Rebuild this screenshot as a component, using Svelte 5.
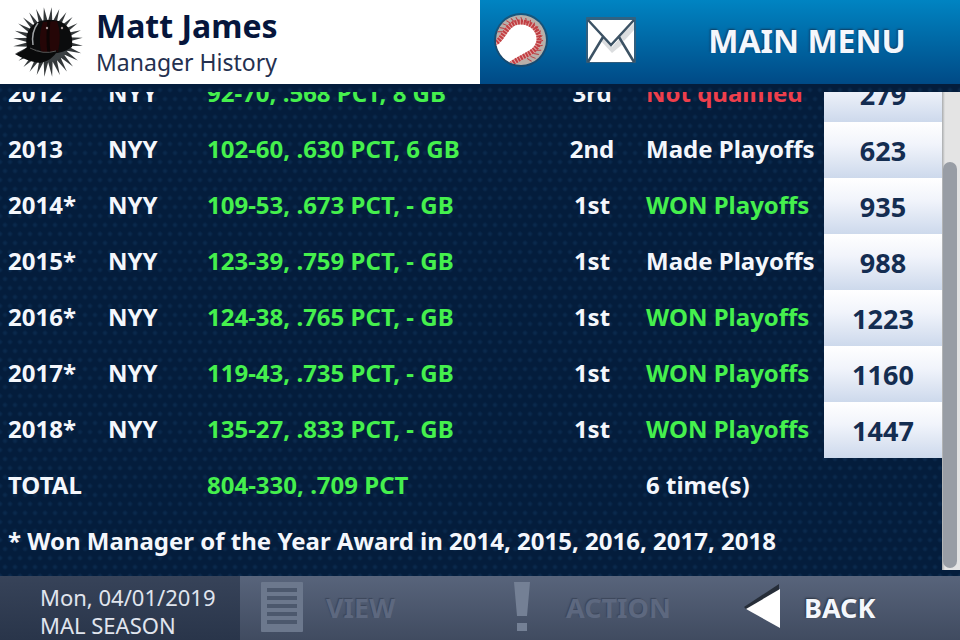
<script lang="ts">
  interface Season {
    year: string
    team: string
    record: string
    place: string
    result: string
    tone: 'plain' | 'good' | 'bad'
    points: number
  }

  const seasons: Season[] = [
    { year: '2012',  team: 'NYY', record: '92-70, .568 PCT, 8 GB',  place: '3rd', result: 'Not qualified', tone: 'bad',   points: 279 },
    { year: '2013',  team: 'NYY', record: '102-60, .630 PCT, 6 GB', place: '2nd', result: 'Made Playoffs', tone: 'plain', points: 623 },
    { year: '2014*', team: 'NYY', record: '109-53, .673 PCT, - GB', place: '1st', result: 'WON Playoffs',  tone: 'good',  points: 935 },
    { year: '2015*', team: 'NYY', record: '123-39, .759 PCT, - GB', place: '1st', result: 'Made Playoffs', tone: 'plain', points: 988 },
    { year: '2016*', team: 'NYY', record: '124-38, .765 PCT, - GB', place: '1st', result: 'WON Playoffs',  tone: 'good',  points: 1223 },
    { year: '2017*', team: 'NYY', record: '119-43, .735 PCT, - GB', place: '1st', result: 'WON Playoffs',  tone: 'good',  points: 1160 },
    { year: '2018*', team: 'NYY', record: '135-27, .833 PCT, - GB', place: '1st', result: 'WON Playoffs',  tone: 'good',  points: 1447 },
  ]

  // spikes around the cap logo, and stitches along the ball's seam
  const spikes = Array.from({ length: 28 }, (_, i) => (i * 360) / 28 + 6)
  const stitches = Array.from({ length: 19 }, (_, i) => -70 + i * 12)
</script>

<div class="screen">
  <header class="top">
    <div class="profile">
      <svg class="crest" viewBox="0 0 72 72" aria-hidden="true">
        {#each spikes as angle}
          <path d="M33.6 17 L36 1 L38.4 17 Z" fill="#34383a" transform="rotate({angle} 36 36)" />
        {/each}
        <circle cx="37" cy="35" r="21" fill="#3b4043" />
        <path d="M15 41 C12 24 21 14 37 14 C53 13 62 23 60 41 Q49 49 35 47 Z" fill="#0b0c0d" />
        <path d="M31 16 Q26 29 29 46 L46 46 Q50 28 45 15 Z" fill="#250607" />
        <path d="M37 14 Q35 31 37 48" fill="none" stroke="#0d0404" stroke-width="3" />
        <path d="M26 17 Q19 26 21 39" fill="none" stroke="#9ea2a4" stroke-width="1.5" />
        <path d="M16 40 Q31 50 46 44 Q40 55 28 57 Q14 55 3 48 Q11 46 16 40 Z" fill="#090a0b" />
        <path d="M18 42 Q31 49 44 45" fill="none" stroke="#555" stroke-width="1" />
        <circle cx="35" cy="22" r="1.2" fill="#a99" />
        <circle cx="50" cy="22" r="1.2" fill="#a99" />
      </svg>
      <div>
        <h1>Matt James</h1>
        <p>Manager History</p>
      </div>
    </div>

    <nav class="menu">
      <button type="button" class="icon-btn" aria-label="Games">
        <svg viewBox="0 0 60 60" aria-hidden="true">
          <defs>
            <clipPath id="ball"><circle cx="30" cy="30" r="25" /></clipPath>
          </defs>
          <circle cx="30" cy="30" r="27" fill="#24445e" opacity=".65" />
          <circle cx="30" cy="30" r="25" fill="#b8afa9" />
          <g clip-path="url(#ball)">
            <path d="M0 35 C13 29 16 13 29 13 C41 13 48 22 47 31 C45 42 33 43 18 56 L0 60 Z" fill="#fff" />
            <path d="M3 34 C13 29 15 13 28 12 C41 11 49 21 48 31 C46 43 34 44 20 54" fill="none" stroke="#dfa5a3" stroke-width="5" />
            <path d="M3 34 C13 29 15 13 28 12 C41 11 49 21 48 31 C46 43 34 44 20 54" fill="none" stroke="#c23e42" stroke-width="5" stroke-dasharray="2 1" />
            {#each stitches as angle}
              <path d="M29 7 L31 12" stroke="#b93b41" stroke-width="1" transform="rotate({angle} 28 31)" />
            {/each}
          </g>
        </svg>
      </button>
      <button type="button" class="icon-btn" aria-label="Mail">
        <svg viewBox="0 0 60 60" aria-hidden="true">
          <rect x="5" y="7" width="50" height="46" rx="1" fill="#3d5c74" opacity=".8" />
          <rect x="7" y="10" width="46" height="42" fill="#fff" />
          <path d="M53 13 L53 20 L43 31 L38 27 Z M20 31 L23 27 L31 37 L39 28 L43 33 L31 43 Z" fill="#c3c6c9" opacity=".6" />
          <path d="M7 10 L30 35 L53 10 M7 52 L22 27 M53 52 L38 27" fill="none" stroke="#3c5264" stroke-width="2.5" />
        </svg>
      </button>
      <button type="button" class="main-menu">MAIN MENU</button>
    </nav>
  </header>

  <main>
    <div class="history">
      <table>
        <colgroup>
          <col class="c-year" />
          <col class="c-team" />
          <col class="c-record" />
          <col class="c-place" />
          <col />
          <col class="c-points" />
        </colgroup>
        <tbody>
          {#each seasons as s (s.year)}
            <tr>
              <td class="first">{s.year}</td>
              <td>{s.team}</td>
              <td class="good">{s.record}</td>
              <td class="place">{s.place}</td>
              <td class={s.tone}>{s.result}</td>
              <td class="points">{s.points}</td>
            </tr>
          {/each}
          <tr>
            <td class="first" colspan="2">TOTAL</td>
            <td class="good">804-330, .709 PCT</td>
            <td></td>
            <td>6 time(s)</td>
            <td></td>
          </tr>
          <tr>
            <td class="first" colspan="6">* Won Manager of the Year Award in 2014, 2015, 2016, 2017, 2018</td>
          </tr>
        </tbody>
      </table>
    </div>
    <div class="track"><div class="thumb"></div></div>
  </main>

  <footer class="bottom">
    <div class="date">
      <span>Mon, 04/01/2019</span>
      <span>MAL SEASON</span>
    </div>
    <button type="button" class="view" disabled>
      <svg viewBox="0 0 44 52" aria-hidden="true">
        <rect x="1" y="1" width="42" height="50" rx="1" fill="#6c788d" />
        <path d="M7 9 H37 M7 17 H37 M7 25 H37 M7 33 H37 M7 41 H37" stroke="#4c586d" stroke-width="4" />
      </svg>
      VIEW
    </button>
    <button type="button" class="action" disabled>
      <svg viewBox="0 0 16 52" aria-hidden="true">
        <path d="M0 1 H16 L13 35 H3 Z M3 42 H13 V50 H3 Z" fill="#748095" />
      </svg>
      ACTION
    </button>
    <button type="button" class="back">
      <svg viewBox="0 0 38 46" aria-hidden="true">
        <path d="M0 23 L35 0 V7 L3 26 Z" fill="#262d38" />
        <path d="M2 25 L36 5 V44 Z" fill="#fff" />
      </svg>
      BACK
    </button>
  </footer>
</div>

<style>
  :global(body) { margin: 0; }

  .screen {
    display: grid;
    grid-template-rows: auto minmax(0, 1fr) auto;
    height: 100vh;
    overflow: hidden;
    font-family: 'Noto Sans', 'Open Sans', sans-serif;
    color: #f4f7fc;
    background-color: #041d3c;
    background-image:
      radial-gradient(circle, #0a294c 1px, transparent 3px),
      radial-gradient(circle, #0a294c 1px, transparent 3px);
    background-size: 10px 18px;
    background-position: 0 0, 5px 9px;
  }

  button {
    border: 0;
    padding: 0;
    background: none;
    color: inherit;
    font: inherit;
    cursor: pointer;
  }
  svg { display: block; flex-shrink: 0; }

  /* header */
  .top {
    display: grid;
    grid-template-columns: 1fr 1fr;
    height: 84px;
  }
  .profile {
    display: flex;
    align-items: center;
    gap: 12px;
    padding-left: 12px;
    background: #fff;
    color: #06163c;
  }
  .crest { width: 72px; height: 72px; }
  h1 {
    margin: 0;
    font-size: 32px;
    line-height: 40px;
    font-weight: 700;
  }
  .profile p {
    margin: 0;
    font-size: 23px;
    line-height: 32px;
    color: #24304f;
  }
  .menu {
    display: flex;
    align-items: center;
    padding: 0 0 4px 11px;
    gap: 30px;
    background: linear-gradient(#0084c2, #004a86);
  }
  .icon-btn svg { width: 60px; height: 60px; }
  .main-menu {
    flex: 1;
    padding-right: 17px;
    font-size: 32px;
    font-weight: 700;
    text-shadow: -1px -1px 2px #123c5e;
  }

  /* season list, scrolled to its end */
  main {
    display: flex;
    padding: 8px 0 6px;
  }
  .history {
    flex: 1;
    display: flex;
    flex-direction: column;
    justify-content: flex-end;
    overflow: hidden;
  }
  table {
    width: 100%;
    table-layout: fixed;
    border-collapse: collapse;
    font-size: 24px;
    font-weight: 700;
  }
  .c-year   { width: 108px; }
  .c-team   { width: 99px; }
  .c-record { width: 331px; }
  .c-place  { width: 108px; }
  .c-points { width: 118px; }
  td {
    height: 54px;
    padding: 0 0 2px;
    line-height: 32px;
    white-space: nowrap;
  }
  .first { padding-left: 8px; }
  .place { text-align: center; }
  .good  { color: #45f04d; }
  .bad   { color: #ee3f4c; }
  .points {
    padding: 2px 0 0;
    text-align: center;
    font-size: 27px;
    color: #142d51;
    background: linear-gradient(#fff, #f1f4fb 40%, #cdd9ec);
  }

  .track {
    box-sizing: border-box;
    width: 18px;
    padding: 70px 3px 2px 1px;
    background: linear-gradient(90deg, #a9abad, #e4e4e4 3px);
  }
  .thumb {
    height: 100%;
    border-radius: 7px;
    background: #989da5;
  }

  /* footer */
  .bottom {
    display: grid;
    grid-template-columns: repeat(4, 1fr);
    height: 64px;
    background: linear-gradient(#58647b, #404b60);
  }
  .date {
    display: flex;
    flex-direction: column;
    justify-content: center;
    padding-left: 40px;
    padding-top: 6px;
    font-size: 22px;
    line-height: 28px;
    color: #e0e5ee;
    background: linear-gradient(#374359, #29354a);
  }
  .bottom button {
    display: flex;
    align-items: center;
    padding-bottom: 2px;
    font-size: 27px;
    font-weight: 700;
  }
  .bottom button:disabled {
    color: #5d687f;
    text-shadow: -1px -1px 1px #3c465a;
  }
  .bottom .view   { padding-left: 20px; gap: 22px; }
  .bottom .action { padding-left: 34px; gap: 36px; }
  .bottom .back   { padding-left: 24px; gap: 22px; text-shadow: -1px -1px 2px #2c3442; }
  .view svg   { width: 44px; height: 52px; }
  .action svg { width: 16px; height: 52px; }
  .back svg   { width: 38px; height: 46px; }
</style>
